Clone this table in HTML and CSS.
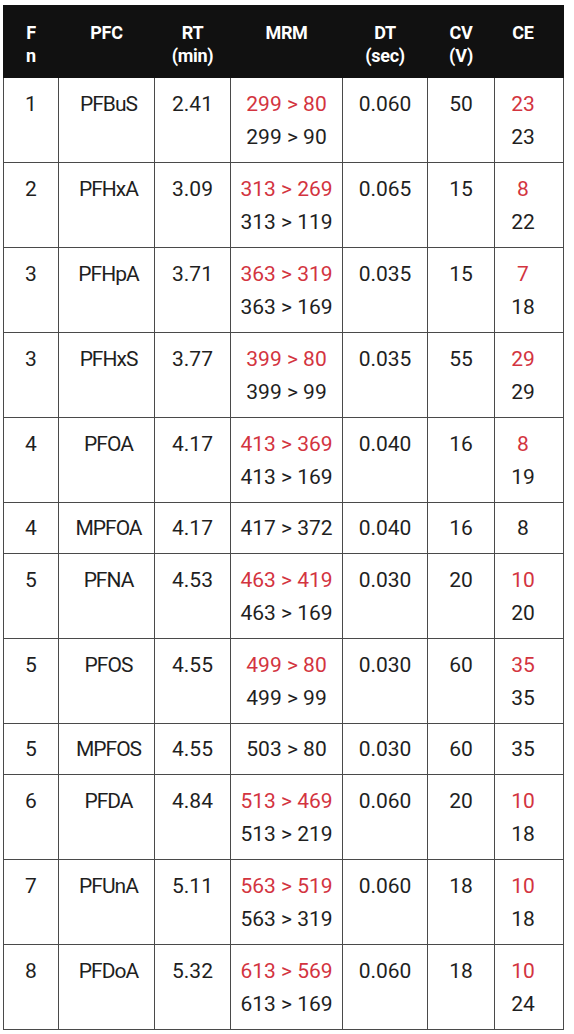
FILE: index.html
```html
<!DOCTYPE html>
<html>
<head>
<meta charset="utf-8">
<link rel="stylesheet" href="styles.css">
</head>
<body>
<table class="pfc">
  <colgroup>
    <col class="c-f"><col class="c-name"><col class="c-rt"><col class="c-mrm"><col class="c-dt"><col class="c-cv"><col class="c-ce">
  </colgroup>
  <thead>
    <tr>
      <th>F<br>n</th>
      <th>PFC</th>
      <th>RT<br>(min)</th>
      <th>MRM</th>
      <th>DT<br>(sec)</th>
      <th>CV<br>(V)</th>
      <th class="ce">CE</th>
    </tr>
  </thead>
  <tbody>
    <tr><td>1</td><td class="name">PFBuS</td><td>2.41</td><td><span class="red">299 &gt; 80</span><br>299 &gt; 90</td><td>0.060</td><td>50</td><td class="ce"><span class="red">23</span><br>23</td></tr>
    <tr><td>2</td><td class="name">PFHxA</td><td>3.09</td><td><span class="red">313 &gt; 269</span><br>313 &gt; 119</td><td>0.065</td><td>15</td><td class="ce"><span class="red">8</span><br>22</td></tr>
    <tr><td>3</td><td class="name">PFHpA</td><td>3.71</td><td><span class="red">363 &gt; 319</span><br>363 &gt; 169</td><td>0.035</td><td>15</td><td class="ce"><span class="red">7</span><br>18</td></tr>
    <tr><td>3</td><td class="name">PFHxS</td><td>3.77</td><td><span class="red">399 &gt; 80</span><br>399 &gt; 99</td><td>0.035</td><td>55</td><td class="ce"><span class="red">29</span><br>29</td></tr>
    <tr><td>4</td><td class="name">PFOA</td><td>4.17</td><td><span class="red">413 &gt; 369</span><br>413 &gt; 169</td><td>0.040</td><td>16</td><td class="ce"><span class="red">8</span><br>19</td></tr>
    <tr class="single"><td>4</td><td class="name">MPFOA</td><td>4.17</td><td>417 &gt; 372</td><td>0.040</td><td>16</td><td class="ce">8</td></tr>
    <tr><td>5</td><td class="name">PFNA</td><td>4.53</td><td><span class="red">463 &gt; 419</span><br>463 &gt; 169</td><td>0.030</td><td>20</td><td class="ce"><span class="red">10</span><br>20</td></tr>
    <tr><td>5</td><td class="name">PFOS</td><td>4.55</td><td><span class="red">499 &gt; 80</span><br>499 &gt; 99</td><td>0.030</td><td>60</td><td class="ce"><span class="red">35</span><br>35</td></tr>
    <tr class="single"><td>5</td><td class="name">MPFOS</td><td>4.55</td><td>503 &gt; 80</td><td>0.030</td><td>60</td><td class="ce">35</td></tr>
    <tr><td>6</td><td class="name">PFDA</td><td>4.84</td><td><span class="red">513 &gt; 469</span><br>513 &gt; 219</td><td>0.060</td><td>20</td><td class="ce"><span class="red">10</span><br>18</td></tr>
    <tr><td>7</td><td class="name">PFUnA</td><td>5.11</td><td><span class="red">563 &gt; 519</span><br>563 &gt; 319</td><td>0.060</td><td>18</td><td class="ce"><span class="red">10</span><br>18</td></tr>
    <tr><td>8</td><td class="name">PFDoA</td><td>5.32</td><td><span class="red">613 &gt; 569</span><br>613 &gt; 169</td><td>0.060</td><td>18</td><td class="ce"><span class="red">10</span><br>24</td></tr>
  </tbody>
</table>
</body>
</html>
```

FILE: styles.css
```css
html, body {
  background: #ffffff;
}
body {
  margin: 5px 0 0 3px;
  font-family: Roboto, "Liberation Sans", sans-serif;
  color: #1f1f1f;
}
.pfc {
  border-collapse: collapse;
  table-layout: fixed;
  width: 561px;
}
.c-f { width: 55px; }
.c-name { width: 96px; }
.c-rt { width: 76px; }
.c-mrm { width: 112px; }
.c-dt { width: 85px; }
.c-cv { width: 67px; }
.c-ce { width: 69px; }

.pfc th {
  background: #111111;
  color: #ffffff;
  font-weight: 700;
  font-size: 18px;
  line-height: 23px;
  letter-spacing: -0.3px;
  text-align: center;
  vertical-align: top;
  padding: 15px 0 10px 0;
  height: 46px;
  border: 1px solid #111111;
}
.pfc td {
  font-size: 21px;
  line-height: 33px;
  text-align: center;
  vertical-align: top;
  padding: 10px 0 8px 0;
  border: 1px solid #4a4a4a;
}
.pfc td.name {
  letter-spacing: -1px;
  padding-left: 4px;
}
.pfc tr.single td {
  padding-top: 9px;
  padding-bottom: 8px;
}
.pfc .ce {
  padding-right: 12px;
}
.red {
  color: #d3343f;
}
```
